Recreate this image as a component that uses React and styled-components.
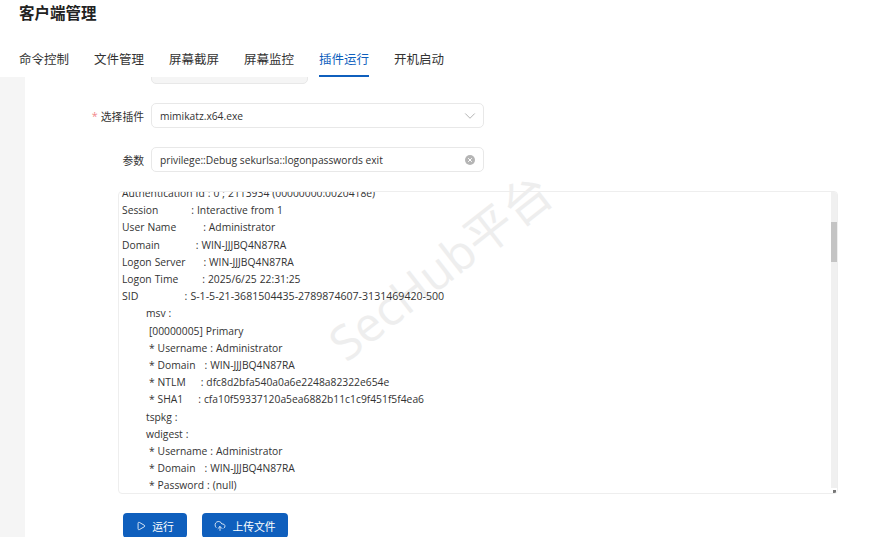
import React from "react";
import styled, { createGlobalStyle } from "styled-components";
import { Play, CloudUpload, ChevronDown } from "lucide-react";

const FONT = `"Open Sans", "Noto Sans CJK SC", sans-serif`;

const Global = createGlobalStyle`
	html, body {
		margin: 0;
		height: 100%;
		background: #fff;
		overflow: hidden;
	}
	#root {
		height: 100%;
	}
`;

const outputLines = [
	"Authentication Id : 0 ; 2113934 (00000000:0020418e)",
	"Session           : Interactive from 1",
	"User Name         : Administrator",
	"Domain            : WIN-JJJBQ4N87RA",
	"Logon Server      : WIN-JJJBQ4N87RA",
	"Logon Time        : 2025/6/25 22:31:25",
	"SID               : S-1-5-21-3681504435-2789874607-3131469420-500",
	"        msv :",
	"         [00000005] Primary",
	"         * Username : Administrator",
	"         * Domain   : WIN-JJJBQ4N87RA",
	"         * NTLM     : dfc8d2bfa540a0a6e2248a82322e654e",
	"         * SHA1     : cfa10f59337120a5ea6882b11c1c9f451f5f4ea6",
	"        tspkg :",
	"        wdigest :",
	"         * Username : Administrator",
	"         * Domain   : WIN-JJJBQ4N87RA",
	"         * Password : (null)",
];

const tabs = ["命令控制", "文件管理", "屏幕截屏", "屏幕监控", "插件运行", "开机启动"];

const Page = styled.div`
	width: 875px;
	height: 537px;
	display: flex;
	flex-direction: column;
	overflow: hidden;
	font-family: ${FONT};
	color: #333;
`;

const Header = styled.header`
	height: 77px;
	flex: none;
	padding-left: 19px;
	box-sizing: border-box;
	display: flex;
	flex-direction: column;
	justify-content: space-between;
`;

const Title = styled.h1`
	margin: 2px 0 0;
	font-size: 15.5px;
	line-height: 22px;
	font-weight: 700;
	color: #222;
`;

const Tabs = styled.nav`
	display: flex;
	gap: 25px;
`;

const Tab = styled.div`
	width: 50px;
	padding-bottom: 5px;
	height: 20px;
	font-size: 12.5px;
	line-height: 20px;
	white-space: nowrap;
	color: ${(p) => (p.$active ? "#0f5fbd" : "#333")};
	border-bottom: 2px solid ${(p) => (p.$active ? "#0f5fbd" : "transparent")};
`;

const Body = styled.div`
	flex: 1;
	min-height: 0;
	display: flex;
`;

const Sidebar = styled.aside`
	width: 25px;
	flex: none;
	background: #f5f5f5;
`;

const Main = styled.main`
	flex: 1;
	min-width: 0;
	overflow: hidden;
	padding-left: 93px;
	position: relative;
`;

const FormRow = styled.div`
	display: flex;
	align-items: center;
	height: 25px;
	margin-bottom: ${(p) => p.$gap}px;
	margin-top: ${(p) => p.$top || 0}px;
`;

const Label = styled.label`
	width: 26px;
	flex: none;
	margin-right: 7px;
	font-size: 10.8px;
	text-align: right;
	white-space: nowrap;
	display: flex;
	justify-content: flex-end;
	gap: 3px;
`;

const Star = styled.span`
	color: #f2888a;
`;

const Field = styled.div`
	width: ${(p) => p.$width}px;
	height: 25px;
	box-sizing: border-box;
	border: 1px solid #e8e8e8;
	border-radius: 5px;
	background: ${(p) => (p.$disabled ? "#f5f5f5" : "#fff")};
	display: flex;
	align-items: center;
	justify-content: space-between;
	padding: 0 8px;
	font-size: 10.25px;
	color: #333;
`;

const Chevron = styled(ChevronDown)`
	margin-right: -4px;
`;

const ClearIcon = styled.svg`
	width: 10px;
	height: 10px;
	display: block;
`;

const OutputBox = styled.div`
	width: 720px;
	height: 303px;
	box-sizing: border-box;
	border: 1px solid #eeeeee;
	border-radius: 4px;
	overflow: hidden;
	position: relative;
	background: transparent;
`;

const OutputText = styled.div`
	margin-top: -7px;
	padding-left: 3px;
`;

const OutputLine = styled.div`
	font-size: ${(p) => (p.$wide ? 10.6 : 10.3)}px;
	line-height: 17.2px;
	word-spacing: 0.32px;
	white-space: pre;
	color: #333;
`;

const ScrollTrack = styled.div`
	position: absolute;
	top: 0;
	right: 0;
	bottom: 5px;
	width: 6px;
	background: #f0f0f0;
`;

const ScrollThumb = styled.div`
	position: absolute;
	top: 30px;
	left: 0;
	width: 6px;
	height: 40px;
	background: #c4c4c4;
`;

const Resize = styled.div`
	position: absolute;
	right: 1px;
	bottom: 0;
	width: 3px;
	height: 3px;
	background: #777;
`;

const Actions = styled.div`
	display: flex;
	gap: 15px;
	margin-top: 19px;
	padding-left: 5px;
`;

const Button = styled.button`
	width: ${(p) => p.$width}px;
	height: 25px;
	border: 0;
	border-radius: 4px;
	background: #0f5fbd;
	color: #fff;
	font-family: ${FONT};
	font-size: 10.8px;
	display: flex;
	align-items: center;
	justify-content: center;
	gap: 6px;
	padding: 0;
`;

const Watermark = styled.div`
	position: absolute;
	left: 282px;
	top: 160px;
	font-size: 48px;
	line-height: 60px;
	color: #eeeeee;
	white-space: nowrap;
	transform: rotate(-38deg);
	pointer-events: none;
`;

export default function App() {
	return (
		<Page>
			<Global />
			<Header>
				<Title>客户端管理</Title>
				<Tabs>
					{tabs.map((t) => (
						<Tab key={t} $active={t === "插件运行"}>
							{t}
						</Tab>
					))}
				</Tabs>
			</Header>
			<Body>
				<Sidebar />
				<Main>
					<Watermark>SecHub平台</Watermark>
					<FormRow $top={-18} $gap={19}>
						<Label />
						<Field $width={157} $disabled />
					</FormRow>
					<FormRow $gap={19}>
						<Label>
							<Star>*</Star>选择插件
						</Label>
						<Field $width={333}>
							mimikatz.x64.exe
							<Chevron size={18} strokeWidth={1.2} color="#aaa" />
						</Field>
					</FormRow>
					<FormRow $gap={19}>
						<Label>参数</Label>
						<Field $width={333}>
							privilege::Debug sekurlsa::logonpasswords exit
							<ClearIcon viewBox="0 0 10 10">
								<circle cx="5" cy="5" r="5" fill="#b5b5b5" />
								<path d="M3.2 3.2l3.6 3.6M6.8 3.2l-3.6 3.6" stroke="#fff" strokeWidth="1" />
							</ClearIcon>
						</Field>
					</FormRow>
					<OutputBox>
						<OutputText>
							{outputLines.map((line, i) => (
								<OutputLine key={i} $wide={line.startsWith("SID")}>
									{line}
								</OutputLine>
							))}
						</OutputText>
						<ScrollTrack>
							<ScrollThumb />
						</ScrollTrack>
						<Resize />
					</OutputBox>
					<Actions>
						<Button $width={64}>
							<Play size={10} strokeWidth={2} />
							运行
						</Button>
						<Button $width={86}>
							<CloudUpload size={12} strokeWidth={1.6} />
							上传文件
						</Button>
					</Actions>
				</Main>
			</Body>
		</Page>
	);
}
